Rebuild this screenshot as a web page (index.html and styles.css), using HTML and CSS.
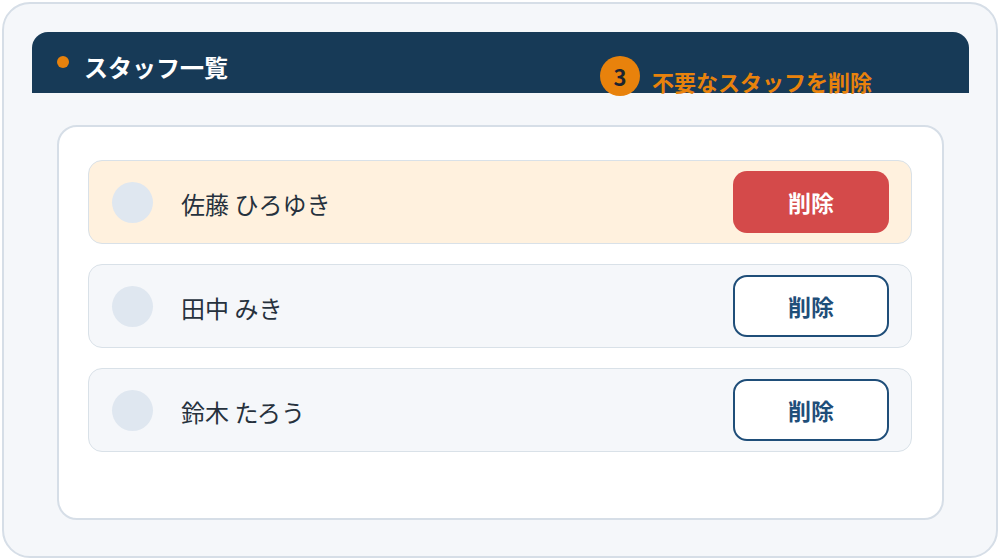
FILE: index.html
```html
<!DOCTYPE html>
<html lang="ja">
<head>
<meta charset="utf-8">
<title>スタッフ一覧</title>
<link rel="stylesheet" href="styles.css">
</head>
<body>
<div class="frame">
  <div class="header">
    <span class="dot"></span>
    <h1 class="title">スタッフ一覧</h1>
  </div>
  <div class="annotation">
    <span class="step">3</span>
    <span class="step-label">不要なスタッフを削除</span>
  </div>
  <div class="card">
    <div class="row row-active">
      <span class="avatar"></span>
      <span class="name">佐藤 ひろゆき</span>
      <button class="btn btn-danger">削除</button>
    </div>
    <div class="row">
      <span class="avatar"></span>
      <span class="name">田中 みき</span>
      <button class="btn btn-outline">削除</button>
    </div>
    <div class="row">
      <span class="avatar"></span>
      <span class="name">鈴木 たろう</span>
      <button class="btn btn-outline">削除</button>
    </div>
  </div>
</div>
</body>
</html>
```
FILE: styles.css
```css
* { box-sizing: border-box; }
html, body { margin: 0; padding: 0; background: #ffffff; }
body {
  font-family: "Noto Sans CJK JP", "Noto Sans", sans-serif;
  width: 1000px;
  height: 560px;
  overflow: hidden;
}
.frame {
  position: relative;
  margin: 2px;
  width: 996px;
  height: 556px;
  border: 2px solid #d6dee7;
  border-radius: 28px;
  background: #f5f7fa;
  padding: 28px 27px 28px 28px;
}
.header {
  display: flex;
  align-items: flex-start;
  height: 61px;
  background: #173a57;
  border-radius: 16px 16px 0 0;
  padding: 20px 25px 0;
}
.dot {
  width: 12px;
  height: 12px;
  border-radius: 50%;
  background: #e8820c;
  margin-top: 4px;
  flex: none;
}
.title {
  margin: 0 0 0 15px;
  font-size: 24px;
  line-height: 30px;
  font-weight: 700;
  color: #ffffff;
}
.annotation {
  position: absolute;
  left: 596px;
  top: 52px;
  display: flex;
  align-items: center;
  gap: 12px;
}
.step {
  width: 40px;
  height: 40px;
  border-radius: 50%;
  background: #e8820c;
  color: #1b2430;
  font-weight: 700;
  font-size: 22px;
  line-height: 1;
  display: flex;
  align-items: center;
  justify-content: center;
}
.step-label {
  color: #e8820c;
  font-weight: 700;
  font-size: 22px;
  line-height: 30px;
  margin-top: 10px;
}
.card {
  margin: 32px 25px 0;
  height: 395px;
  background: #ffffff;
  border: 2px solid #d6dee7;
  border-radius: 20px;
  padding: 33px 30px 0 29px;
  display: flex;
  flex-direction: column;
  gap: 20px;
}
.row {
  display: flex;
  align-items: center;
  height: 84px;
  padding: 0 22px 0 23px;
  background: #f5f7fa;
  border: 1px solid #d9e1e8;
  border-radius: 14px;
}
.row-active { background: #fff1de; }
.avatar {
  width: 41px;
  height: 41px;
  border-radius: 50%;
  background: #dfe7f0;
  flex: none;
}
.name {
  margin-left: 28px;
  margin-top: 3px;
  font-size: 24px;
  color: #26313d;
  flex: 1;
}
.btn {
  width: 156px;
  height: 62px;
  border-radius: 14px;
  font-family: inherit;
  font-size: 23px;
  font-weight: 700;
  cursor: pointer;
  padding: 0;
}
.btn-danger {
  background: #d44a4a;
  color: #ffffff;
  border: none;
}
.btn-outline {
  background: #ffffff;
  color: #1f4e79;
  border: 2px solid #1f4e79;
}
```
